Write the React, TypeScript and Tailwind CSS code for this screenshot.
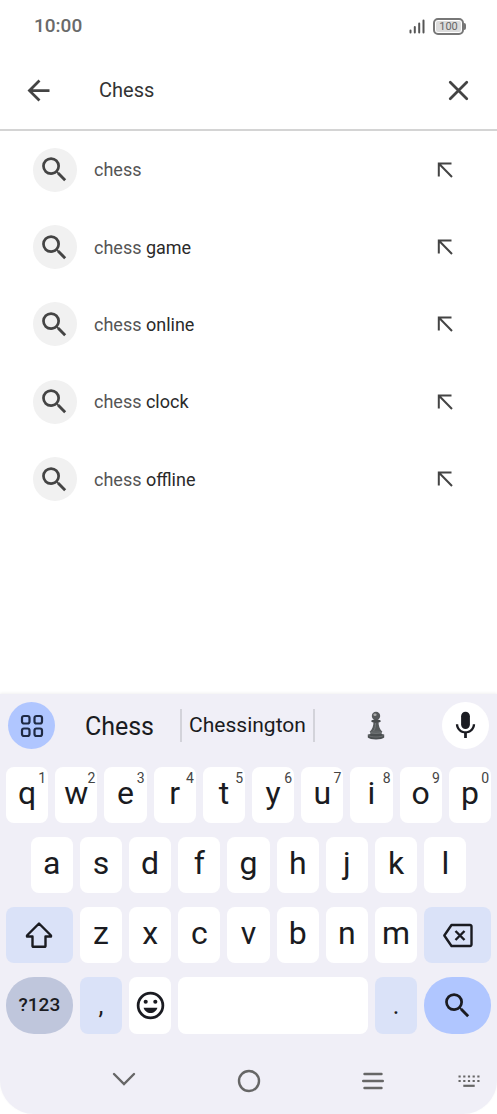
import React from 'react';

interface Suggestion {
  typed: string;
  rest: string;
}

const suggestions: Suggestion[] = [
  { typed: 'chess', rest: '' },
  { typed: 'chess', rest: 'game' },
  { typed: 'chess', rest: 'online' },
  { typed: 'chess', rest: 'clock' },
  { typed: 'chess', rest: 'offline' },
];

const topRow = ['q', 'w', 'e', 'r', 't', 'y', 'u', 'i', 'o', 'p'];
const middleRow = ['a', 's', 'd', 'f', 'g', 'h', 'j', 'k', 'l'];
const bottomRow = ['z', 'x', 'c', 'v', 'b', 'n', 'm'];

const SearchIcon: React.FC = () => (
  <svg width="33" height="33" viewBox="0 0 24 24" fill="currentColor" aria-hidden="true">
    <path d="M15.5 14h-.79l-.28-.27A6.47 6.47 0 0 0 16 9.5 6.5 6.5 0 1 0 9.5 16c1.61 0 3.09-.59 4.23-1.57l.27.28v.79l5 4.99L20.49 19l-4.99-5zm-6 0C7.01 14 5 11.99 5 9.5S7.01 5 9.5 5 14 7.01 14 9.5 11.99 14 9.5 14z" />
  </svg>
);

const StatusBar: React.FC = () => (
  <div className="flex h-[52px] items-center justify-between pl-[34px] pr-[31px] text-[#6a6a6a]">
    <span className="text-[19px] font-medium">10:00</span>
    <div className="flex items-center gap-2">
      <svg width="16" height="16" viewBox="0 0 16 16" stroke="#555" strokeWidth="2" strokeLinecap="round" aria-hidden="true">
        <path d="M1.5 12.5v2M5.8 9v5.5M10.2 5.500v9M14.5 2.500v12" />
      </svg>
      <div className="flex items-center">
        <div className="flex h-[17px] w-[31px] items-center justify-center rounded-[5px] border-2 border-[#777] p-px">
          <span className="flex h-full w-full items-center justify-center rounded-[2px] bg-[#dcdcdc] text-[11px] leading-none text-[#666]">
            100
          </span>
        </div>
        <div className="h-[7px] w-[2px] rounded-r-sm bg-[#777]" />
      </div>
    </div>
  </div>
);

const SearchHeader: React.FC = () => (
  <header className="flex h-[79px] items-center border-b-2 border-[#d4d4d4] px-[22px] text-[#444]">
    <button type="button" aria-label="Back">
      <svg width="33" height="33" viewBox="0 0 24 24" fill="currentColor">
        <path d="M20 11H7.83l5.59-5.59L12 4l-8 8 8 8 1.41-1.41L7.83 13H20v-2z" />
      </svg>
    </button>
    <input
      type="text"
      aria-label="Search apps"
      defaultValue="Chess"
      className="ml-11 min-w-0 flex-1 bg-transparent pb-px text-[20px] text-[#333] outline-none"
    />
    <button type="button" aria-label="Clear">
      <svg width="33" height="33" viewBox="0 0 24 24" fill="none" stroke="currentColor" strokeWidth="2" strokeLinecap="round">
        <path d="M6 6l12 12M18 6L6 18" />
      </svg>
    </button>
  </header>
);

const SuggestionRow: React.FC<{ item: Suggestion }> = ({ item }) => (
  <li className="flex items-center pl-[33px] pr-[42px]">
    <span className="flex size-11 items-center justify-center rounded-full bg-[#f1f1f1] pr-px text-[#444]">
      <SearchIcon />
    </span>
    <a href="#" className="ml-[17px] flex-1 text-[18px] text-[#555]">
      {item.typed} <span className="text-[#2a2a2a]">{item.rest}</span>
    </a>
    <button type="button" aria-label="Use this suggestion" className="text-[#444]">
      <svg width="20" height="20" viewBox="0 0 20 20" fill="none" stroke="currentColor" strokeWidth="2">
        <path d="M16.5 3.5H3.8V16.5M3.800 3.500L17 17" />
      </svg>
    </button>
  </li>
);

const LetterKey: React.FC<{ label: string; hint?: string; className?: string }> = ({
  label,
  hint,
  className = '',
}) => (
  <button
    type="button"
    className={`relative col-span-2 flex h-14 items-center justify-center rounded-lg bg-white pb-1 text-[32px] leading-none ${className}`}
  >
    {label}
    {hint && (
      <span className="absolute top-1 right-[2px] text-[14px] leading-none text-[#444]">{hint}</span>
    )}
  </button>
);

const PawnIcon: React.FC = () => (
  <svg width="18" height="29" viewBox="0 0 18 29" aria-hidden="true">
    <path d="M6.500 10h5c0 5 1 8 4 11h-13c3-3 4-6 4-11z" fill="#56595b" />
    <circle cx="9" cy="5" r="4.2" fill="#56595b" />
    <ellipse cx="9" cy="10" rx="4.8" ry="1.6" fill="#484b4d" />
    <path d="M3 20.5c3-1.5 9-1.5 12 0l-.5 3h-11z" fill="#606466" />
    <path d="M.8 23.500c3-1.500 13.400-1.500 16.400 0v3c-2 2.500-14.400 2.500-16.400 0z" fill="#4a4e50" />
    <path d="M1.500 24.500c3 2 12 2 15 0M3.500 21.500c3 1.300 8 1.300 11 0" fill="none" stroke="#7b7e80" strokeWidth=".7" />
    <ellipse cx="8" cy="3.8" rx="1.6" ry="1.2" fill="#aaa" />
    <path d="M8.500 12c0 4-.5 6-2 8" fill="none" stroke="#74787a" strokeWidth="1" />
  </svg>
);

const SuggestionStrip: React.FC = () => (
  <div className="flex items-center px-2">
    <button type="button" aria-label="Keyboard tools" className="flex size-[47px] items-center justify-center rounded-full bg-[#b0c6ff] text-[#1f2a44]">
      <svg width="24" height="24" viewBox="0 0 24 24" fill="none" stroke="currentColor" strokeWidth="2.2">
        <rect x="2" y="2" width="7.5" height="7.5" rx="2" />
        <rect x="14.5" y="2" width="7.5" height="7.5" rx="2" />
        <rect x="2" y="14.5" width="7.5" height="7.5" rx="2" />
        <rect x="14.5" y="14.5" width="7.5" height="7.5" rx="2" />
      </svg>
    </button>
    <div className="grid h-[33px] flex-1 grid-cols-[12fr_13fr_12fr] pr-[2px]">
      <button type="button" className="pl-1 pt-px text-[25px] leading-none">Chess</button>
      <button type="button" className="border-x-2 border-[#d3d3da] text-[21px] leading-none">
        Chessington
      </button>
      <button type="button" aria-label="Chess pawn" className="flex items-center justify-center pr-1">
        <PawnIcon />
      </button>
    </div>
    <button type="button" aria-label="Voice input" className="flex size-[47px] items-center justify-center rounded-full bg-white">
      <svg width="33" height="33" viewBox="0 0 24 24" fill="currentColor">
        <rect x="8.8" y="2" width="6.4" height="12.5" rx="3.2" />
        <path d="M17.3 11c0 3-2.54 5.1-5.3 5.1S6.7 14 6.7 11H5c0 3.41 2.72 6.23 6 6.72V21h2v-3.28c3.28-.48 6-3.3 6-6.72h-1.7z" />
      </svg>
    </button>
  </div>
);

const NavigationBar: React.FC = () => (
  <nav className="grid grid-cols-8 pt-[29px] pb-[15px] text-[#666]">
    <button type="button" aria-label="Hide keyboard" className="col-span-2 col-start-2 flex h-9 items-center justify-center pb-1">
      <svg width="24" height="16" viewBox="0 0 24 16" fill="none" stroke="currentColor" strokeWidth="2.4" strokeLinecap="round">
        <path d="M2 3l10 10L22 3" />
      </svg>
    </button>
    <button type="button" aria-label="Home" className="col-span-2 flex h-9 items-center justify-center">
      <svg width="24" height="24" viewBox="0 0 24 24" fill="none" stroke="currentColor" strokeWidth="2.4">
        <circle cx="12" cy="12" r="10" />
      </svg>
    </button>
    <button type="button" aria-label="Recent apps" className="col-span-2 flex h-9 items-center justify-center">
      <svg width="24" height="18" viewBox="0 0 24 18" stroke="currentColor" strokeWidth="2.4" strokeLinecap="round">
        <path d="M3.5 2h17M2.2 9h19.6M3.5 16h17" />
      </svg>
    </button>
    <button type="button" aria-label="Change keyboard" className="flex h-9 items-center justify-center pl-[6px]">
      <svg width="22" height="14" viewBox="0 0 22 14" stroke="currentColor" strokeWidth="2.2">
        <path d="M.5 2.5h21M.5 7h21" strokeDasharray="2.2 2.5" />
        <path d="M5.3 11.8h11.4" />
      </svg>
    </button>
  </nav>
);

const Keyboard: React.FC = () => (
  <section aria-label="Keyboard" className="rounded-b-[34px] bg-[#f0eff7] pt-2 text-[#1a1b21] shadow-[0_-1px_3px_rgba(0,0,0,0.06)]">
    <SuggestionStrip />
    <div className="mt-[18px] grid grid-cols-20 gap-x-[7px] gap-y-[14px] px-[6px]">
      {topRow.map((letter, i) => (
        <LetterKey key={letter} label={letter} hint={String((i + 1) % 10)} />
      ))}

      {middleRow.map((letter, i) => (
        <LetterKey key={letter} label={letter} className={i === 0 ? 'col-start-2' : ''} />
      ))}

      <button type="button" aria-label="Shift" className="col-span-3 col-start-1 flex h-14 items-center justify-center rounded-lg bg-[#dae2f8]">
        <svg width="28" height="28" viewBox="0 0 28 28" fill="none" stroke="currentColor" strokeWidth="2.4" strokeLinejoin="round">
          <path d="M14 2.5L26 14.500v1H20.500V25a.8.8 0 0 1-.8.8H8.300a.8.8 0 0 1-.8-.8v-9.500H2v-1z" />
        </svg>
      </button>
      {bottomRow.map((letter) => (
        <LetterKey key={letter} label={letter} />
      ))}
      <button type="button" aria-label="Backspace" className="col-span-3 flex h-14 items-center justify-center rounded-lg bg-[#dae2f8]">
        <svg width="32" height="26" viewBox="0 0 32 26" fill="none" stroke="currentColor" strokeWidth="2.4" strokeLinejoin="round">
          <path d="M9.5 3H28a1.500 1.500 0 0 1 1.500 1.500v18A1.500 1.500 0 0 1 28 24H9.500L2.300 13.500z" />
          <path d="M13.500 9l9 9M22.500 9l-9 9" />
        </svg>
      </button>

      <button type="button" className="col-span-3 h-[57px] rounded-[28px] bg-[#bfc6dc] pb-px text-[19px] font-medium">
        ?123
      </button>
      <button type="button" className="col-span-2 h-[57px] rounded-lg bg-[#dae2f8] text-[25px] leading-none">
        ,
      </button>
      <button type="button" aria-label="Emoji" className="col-span-2 flex h-[57px] items-center justify-center rounded-lg bg-white">
        <svg width="33" height="33" viewBox="0 0 24 24" fill="currentColor">
          <circle cx="12" cy="12" r="9" fill="none" stroke="currentColor" strokeWidth="2" />
          <circle cx="8.5" cy="9.3" r="1.5" />
          <circle cx="15.5" cy="9.3" r="1.5" />
          <path d="M7 13.6h10c-.7 2.3-2.6 3.9-5 3.9s-4.3-1.600-5-3.900z" />
        </svg>
      </button>
      <button type="button" aria-label="Space" className="col-span-8 h-[57px] rounded-lg bg-white" />
      <button type="button" className="col-span-2 h-[57px] rounded-lg bg-[#dae2f8] text-[25px] leading-none">
        .
      </button>
      <button type="button" aria-label="Search" className="col-span-3 flex h-[57px] items-center justify-center rounded-[28px] bg-[#b0c6ff]">
        <SearchIcon />
      </button>
    </div>
    <NavigationBar />
  </section>
);

export default function App() {
  return (
    <div className="flex min-h-screen flex-col bg-white font-['Roboto',sans-serif]">
      <StatusBar />
      <SearchHeader />
      <main className="flex-1">
        <ul className="grid min-h-[387px] grid-rows-5">
          {suggestions.map((item) => (
            <SuggestionRow key={item.rest} item={item} />
          ))}
        </ul>
      </main>
      <Keyboard />
    </div>
  );
}
